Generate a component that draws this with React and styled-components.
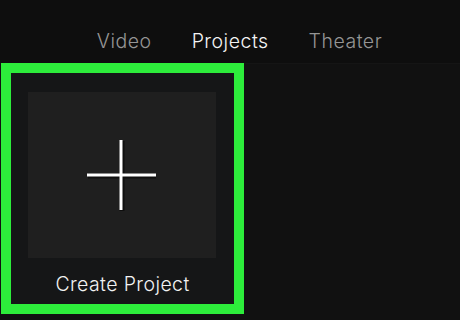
import styled, { createGlobalStyle } from 'styled-components';

const GlobalStyle = createGlobalStyle`
    html, body {
        margin: 0;
        padding: 0;
        background: #0e0e0e;
    }
    body {
        font-family: Inter, "Liberation Sans", sans-serif;
    }
`

const Page = styled.div`
    width: 460px;
    height: 320px;
    display: flex;
    flex-direction: column;
    background: #0e0e0e;
    overflow: hidden;
`

const Tabs = styled.nav`
    height: 64px;
    box-sizing: border-box;
    display: flex;
    justify-content: center;
    align-items: flex-start;
    padding: 29px 0 0 19px;
    gap: 40px;
    border-bottom: 1px solid #151515;
`

const Tab = styled.span`
    font-size: 19.5px;
    font-weight: 300;
    letter-spacing: 0.5px;
    color: ${({ active }) => active ? '#f4f4f4' : '#959595'};
`

const Content = styled.main`
    flex: 1;
    background: #111111;
    padding: 0 0 0 1px;
`

const Card = styled.div`
    width: 243px;
    height: 251px;
    box-sizing: border-box;
    border: 10px solid #2ded3b;
    background: #151617;
    display: flex;
    flex-direction: column;
    align-items: center;
    padding-top: 19px;
    margin-top: -1px;
`

const Thumb = styled.div`
    width: 188px;
    height: 166px;
    margin-left: -2px;
    background: #1f1f1f;
    display: flex;
    align-items: center;
    justify-content: center;
`

const Label = styled.div`
    margin-top: 14px;
    font-size: 19.5px;
    font-weight: 300;
    color: #f2f2f2;
    letter-spacing: 0.4px;
`

function PlusIcon() {
    return (
        <svg width="72" height="72" viewBox="0 0 72 72">
            <g stroke="#000" strokeWidth="5" opacity="0.5">
                <line x1="36" y1="2" x2="36" y2="72" />
                <line x1="2" y1="37" x2="70" y2="37" />
            </g>
            <g stroke="#fff" strokeWidth="3">
                <line x1="35" y1="1" x2="35" y2="71" />
                <line x1="1" y1="36" x2="70" y2="36" />
            </g>
        </svg>
    )
}

export default function App() {
    return (
        <Page>
            <GlobalStyle />
            <Tabs>
                <Tab>Video</Tab>
                <Tab active>Projects</Tab>
                <Tab>Theater</Tab>
            </Tabs>
            <Content>
                <Card>
                    <Thumb>
                        <PlusIcon />
                    </Thumb>
                    <Label>Create Project</Label>
                </Card>
            </Content>
        </Page>
    )
}
